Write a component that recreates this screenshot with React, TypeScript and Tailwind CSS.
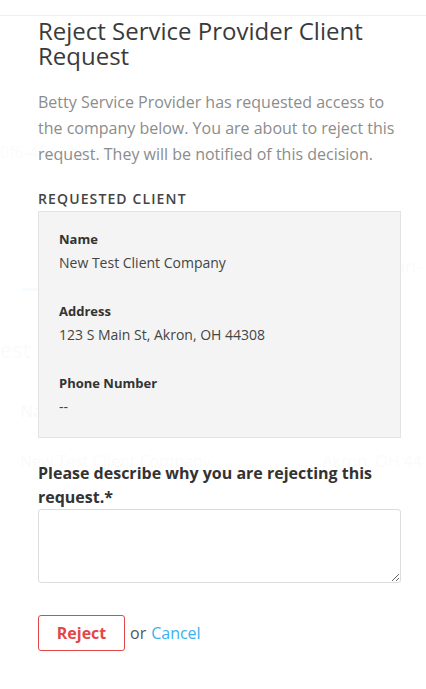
import React from 'react';

const font = { fontFamily: '"Open Sans", "Noto Sans", sans-serif' };

function BackgroundPage() {
  return (
    <div className="min-h-[689px] w-[426px] overflow-hidden bg-white text-[#333]">
      <div className="h-[140px]" />
      <div className="whitespace-nowrap text-[16px] leading-[24px] text-[#888]">
        0f6-4542-beea-d9eadbaf946
      </div>
      <div className="h-[90px]" />
      <div className="flex justify-end whitespace-nowrap pr-[4px] text-[18px] leading-[24px] text-[#888]">
        on-
      </div>
      <div className="h-[10px]" />
      <div className="ml-[22px] h-[3px] w-[60px] bg-[#3ab0f0]" />
      <div className="h-[44px]" />
      <div className="whitespace-nowrap text-[22px] leading-[28px] text-[#888]">est Client</div>
      <div className="h-[36px]" />
      <div className="ml-[20px] text-[16px] font-bold leading-[24px] text-[#888]">Name</div>
      <div className="mt-[8px] flex h-[60px] items-center justify-between bg-[#eef3f8] pl-[20px] pr-[4px] text-[16px] text-[#888] whitespace-nowrap">
        <span>New Test Client Company</span>
        <span>Akron, OH 44</span>
      </div>
    </div>
  );
}

export default function App() {
  return (
    <div className="relative h-[689px] w-[426px] overflow-hidden" style={font}>
      <BackgroundPage />
      <div className="absolute inset-0 bg-white/[0.96]">
        <div className="mt-[15px] border-t border-[#f0f0f0] pl-[38px] pr-[25px] pt-[2px]">
          <h1 className="text-[24px] leading-[25px] font-normal text-[#3a3a3a]">
            Reject Service Provider Client Request
          </h1>
          <p className="mt-[21px] text-[16px] leading-[26px] text-[#8c8c8c]">
            Betty Service Provider has requested access to the company below. You are about to reject this request. They will be notified of this decision.
          </p>
          <h2 className="mt-[22px] text-[14px] font-semibold uppercase tracking-[0.08em] leading-[20px] text-[#444]">
            Requested Client
          </h2>
          <div className="mt-[2px] border border-[#e3e3e3] bg-[#f4f4f4] px-[20px] pt-[15px] pb-[18px]">
            {[
              ['Name', 'New Test Client Company'],
              ['Address', '123 S Main St, Akron, OH 44308'],
              ['Phone Number', '--'],
            ].map(([label, value], i) => (
              <div key={label} className={i > 0 ? 'mt-[24px]' : ''}>
                <div className="text-[13px] font-bold leading-[24px] text-[#333]">{label}</div>
                <div className="text-[14px] leading-[24px] text-[#444]">{value}</div>
              </div>
            ))}
          </div>
          <label className="mt-[23px] block text-[16px] font-bold leading-[24px] text-[#333]">
            Please describe why you are rejecting this request.*
          </label>
          <textarea className="block h-[74px] w-full rounded-[3px] border border-[#dcdcdc] bg-white" />
          <div className="mt-[32px] flex items-center">
            <button className="h-[36px] w-[87px] rounded-[3px] border border-[#e24747] text-[16px] font-bold text-[#e24747]">
              Reject
            </button>
            <span className="ml-[5px] text-[16px] text-[#555]">or</span>
            <a className="ml-[5px] text-[16px] text-[#3ab0f0]">Cancel</a>
          </div>
        </div>
      </div>
    </div>
  );
}
